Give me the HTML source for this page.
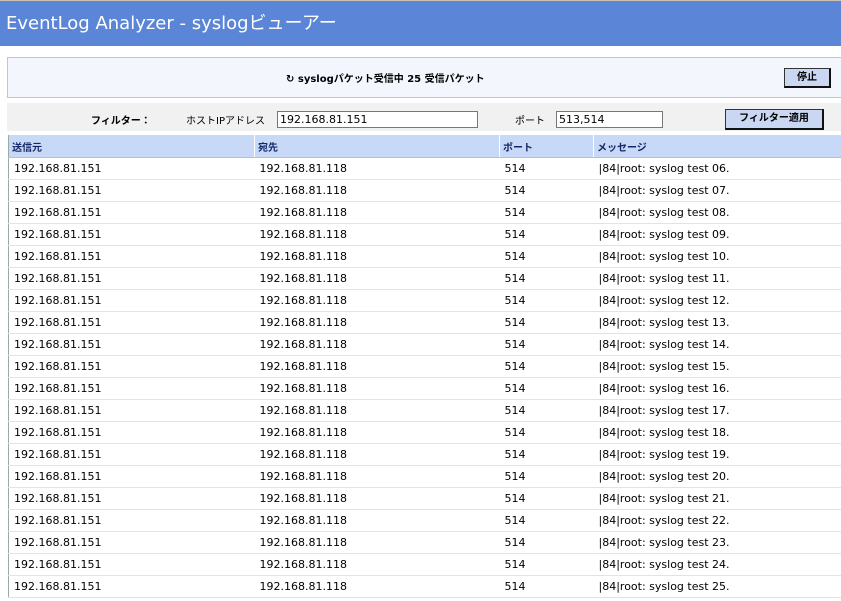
<!DOCTYPE html>
<html><head><meta charset="utf-8"><style>
body{margin:0;width:841px;height:601px;overflow:hidden;background:#fff;font-family:"DejaVu Sans","Noto Sans CJK JP",sans-serif;font-size:11px;color:#000;position:relative}
.title{position:absolute;left:0;top:0;width:841px;height:46px;background:#5b85d6;border-top:1px solid #c8c0b0;box-sizing:border-box;color:#fff;font-size:18px;line-height:46px;padding-left:6px}
.status{position:absolute;left:7px;top:57px;width:840px;height:41px;background:#f3f6fc;border:1px solid #b9c5dc;box-sizing:border-box}
.status .t{position:absolute;left:278px;top:12px;font-weight:bold;font-size:10px}
.btn{position:absolute;background:#c9d7f3;border:1px solid #333;border-right:2px solid #111;border-bottom:2px solid #111;font-weight:bold;font-size:10px;text-align:center;box-sizing:border-box;color:#000}
.filter{position:absolute;left:7px;top:103px;width:834px;height:28px;background:#f1f1f1}
.lbl{position:absolute;top:9px;font-size:10px}
.inp{position:absolute;top:8px;height:17px;background:#fff;border:1px solid #777;box-sizing:border-box;font-size:11px;padding-left:2px;line-height:15px}
table{position:absolute;left:8px;top:135px;border-collapse:collapse;width:840px;border-left:1px solid #9aa;border-bottom:1px solid #9aa}
th{background:#c7d9f6;height:22px;text-align:left;font-size:10px;padding:0 0 0 3px;border-right:1px solid #fff;color:#13286a;border-bottom:1px solid #b0c0dc}
td{height:21px;padding:0 0 0 5px;border-bottom:1px solid #dde4ee;font-size:11px}
</style></head><body>
<div class="title">EventLog Analyzer - syslogビューアー</div>
<div class="status"><span class="t">↻ syslogパケット受信中 25 受信パケット</span>
<div class="btn" style="left:776px;top:10px;width:47px;height:20px;line-height:18px">停止</div></div>
<div class="filter">
<span class="lbl" style="left:84px;font-weight:bold">フィルター：</span>
<span class="lbl" style="left:179px">ホストIPアドレス</span>
<div class="inp" style="left:270px;width:201px">192.168.81.151</div>
<span class="lbl" style="left:508px">ポート</span>
<div class="inp" style="left:549px;width:107px">513,514</div>
<div class="btn" style="left:718px;top:6px;width:99px;height:21px;line-height:18px">フィルター適用</div>
</div>
<table>
<tr><th style="width:242px">送信元</th><th style="width:241px">宛先</th><th style="width:90px">ポート</th><th>メッセージ</th></tr>
<tr><td>192.168.81.151</td><td>192.168.81.118</td><td>514</td><td>|84|root: syslog test 06.</td></tr>
<tr><td>192.168.81.151</td><td>192.168.81.118</td><td>514</td><td>|84|root: syslog test 07.</td></tr>
<tr><td>192.168.81.151</td><td>192.168.81.118</td><td>514</td><td>|84|root: syslog test 08.</td></tr>
<tr><td>192.168.81.151</td><td>192.168.81.118</td><td>514</td><td>|84|root: syslog test 09.</td></tr>
<tr><td>192.168.81.151</td><td>192.168.81.118</td><td>514</td><td>|84|root: syslog test 10.</td></tr>
<tr><td>192.168.81.151</td><td>192.168.81.118</td><td>514</td><td>|84|root: syslog test 11.</td></tr>
<tr><td>192.168.81.151</td><td>192.168.81.118</td><td>514</td><td>|84|root: syslog test 12.</td></tr>
<tr><td>192.168.81.151</td><td>192.168.81.118</td><td>514</td><td>|84|root: syslog test 13.</td></tr>
<tr><td>192.168.81.151</td><td>192.168.81.118</td><td>514</td><td>|84|root: syslog test 14.</td></tr>
<tr><td>192.168.81.151</td><td>192.168.81.118</td><td>514</td><td>|84|root: syslog test 15.</td></tr>
<tr><td>192.168.81.151</td><td>192.168.81.118</td><td>514</td><td>|84|root: syslog test 16.</td></tr>
<tr><td>192.168.81.151</td><td>192.168.81.118</td><td>514</td><td>|84|root: syslog test 17.</td></tr>
<tr><td>192.168.81.151</td><td>192.168.81.118</td><td>514</td><td>|84|root: syslog test 18.</td></tr>
<tr><td>192.168.81.151</td><td>192.168.81.118</td><td>514</td><td>|84|root: syslog test 19.</td></tr>
<tr><td>192.168.81.151</td><td>192.168.81.118</td><td>514</td><td>|84|root: syslog test 20.</td></tr>
<tr><td>192.168.81.151</td><td>192.168.81.118</td><td>514</td><td>|84|root: syslog test 21.</td></tr>
<tr><td>192.168.81.151</td><td>192.168.81.118</td><td>514</td><td>|84|root: syslog test 22.</td></tr>
<tr><td>192.168.81.151</td><td>192.168.81.118</td><td>514</td><td>|84|root: syslog test 23.</td></tr>
<tr><td>192.168.81.151</td><td>192.168.81.118</td><td>514</td><td>|84|root: syslog test 24.</td></tr>
<tr><td>192.168.81.151</td><td>192.168.81.118</td><td>514</td><td>|84|root: syslog test 25.</td></tr>
</table>
</body></html>
